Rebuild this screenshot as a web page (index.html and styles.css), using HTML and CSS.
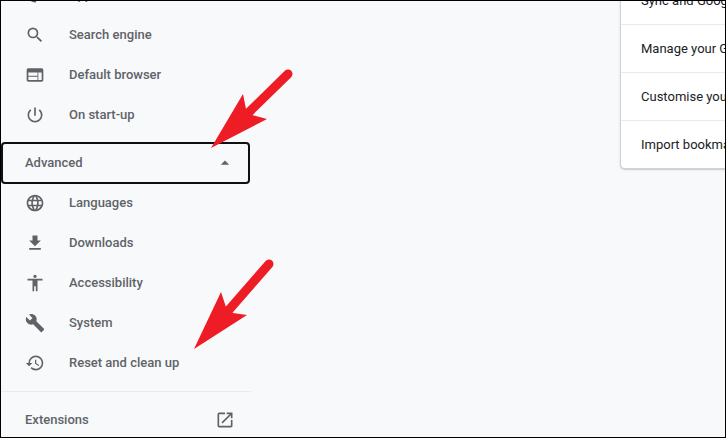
FILE: index.html
```html
<!DOCTYPE html>
<html lang="en">
<head>
    <meta charset="UTF-8">
    <meta name="viewport" content="width=device-width, initial-scale=1.0">
    <title>Settings</title>
    <link rel="stylesheet" href="styles.css">
</head>
<body>
    <div class="frame">
        <nav class="sidebar">
            <a class="menu-item" href="#appearance">
                <svg class="icon" viewBox="0 0 24 24"><path d="M12 3a9 9 0 0 0 0 18c.83 0 1.5-.67 1.5-1.5 0-.39-.15-.74-.39-1.01-.23-.26-.38-.61-.38-.99 0-.83.67-1.5 1.5-1.5H16c2.76 0 5-2.24 5-5 0-4.42-4.03-8-9-8z"/></svg>
                Appearance
            </a>
            <a class="menu-item" href="#search">
                <svg class="icon" viewBox="0 0 24 24"><path d="M15.5 14h-.79l-.28-.27A6.471 6.471 0 0 0 16 9.5 6.5 6.5 0 1 0 9.5 16c1.61 0 3.09-.59 4.23-1.57l.27.28v.79l5 4.99L20.49 19l-4.99-5zm-6 0C7.01 14 5 11.99 5 9.5S7.01 5 9.5 5 14 7.01 14 9.5 11.99 14 9.5 14z"/></svg>
                Search engine
            </a>
            <a class="menu-item" href="#default-browser">
                <svg class="icon" viewBox="0 0 24 24"><path d="M20 4H4c-1.1 0-1.99.9-1.99 2L2 18c0 1.1.9 2 2 2h16c1.1 0 2-.9 2-2V6c0-1.1-.9-2-2-2zm-5 14H4v-4h11v4zm0-5H4V9h11v4zm5 5h-4V9h4v9z"/></svg>
                Default browser
            </a>
            <a class="menu-item" href="#startup">
                <svg class="icon" viewBox="0 0 24 24"><path d="M13 3h-2v10h2V3zm4.83 2.17l-1.42 1.42A6.92 6.92 0 0 1 19 12c0 3.87-3.13 7-7 7s-7-3.13-7-7c0-2.19 1.01-4.14 2.58-5.42L6.17 5.17A8.932 8.932 0 0 0 3 12a9 9 0 0 0 18 0c0-2.74-1.23-5.18-3.17-6.83z"/></svg>
                On start-up
            </a>

            <button class="advanced" type="button" aria-expanded="true">
                Advanced
                <svg class="icon" viewBox="0 0 24 24"><path d="M7 14l5-5 5 5z"/></svg>
            </button>

            <a class="menu-item" href="#languages">
                <svg class="icon" viewBox="0 0 24 24"><path d="M11.99 2C6.47 2 2 6.48 2 12s4.47 10 9.99 10C17.52 22 22 17.52 22 12S17.52 2 11.99 2zm6.93 6h-2.95a15.65 15.65 0 0 0-1.38-3.56A8.03 8.03 0 0 1 18.92 8zM12 4.04c.83 1.2 1.48 2.53 1.91 3.96h-3.82c.43-1.43 1.08-2.76 1.91-3.96zM4.26 14C4.1 13.36 4 12.69 4 12s.1-1.36.26-2h3.38c-.08.66-.14 1.32-.14 2s.06 1.34.14 2H4.26zm.82 2h2.95c.32 1.25.78 2.45 1.38 3.56A7.987 7.987 0 0 1 5.08 16zm2.95-8H5.08a7.987 7.987 0 0 1 4.33-3.56A15.65 15.65 0 0 0 8.03 8zM12 19.96c-.83-1.2-1.48-2.53-1.91-3.96h3.82c-.43 1.43-1.08 2.76-1.91 3.96zM14.34 14H9.66c-.09-.66-.16-1.32-.16-2s.07-1.35.16-2h4.68c.09.65.16 1.32.16 2s-.07 1.34-.16 2zm.25 5.56c.6-1.11 1.06-2.31 1.38-3.56h2.95a8.03 8.03 0 0 1-4.33 3.56zM16.36 14c.08-.66.14-1.32.14-2s-.06-1.34-.14-2h3.38c.16.64.26 1.31.26 2s-.1 1.36-.26 2h-3.38z"/></svg>
                Languages
            </a>
            <a class="menu-item" href="#downloads">
                <svg class="icon" viewBox="0 0 24 24"><path d="M19 9h-4V3H9v6H5l7 7 7-7zM5 18v2h14v-2H5z"/></svg>
                Downloads
            </a>
            <a class="menu-item" href="#accessibility">
                <svg class="icon" viewBox="0 0 24 24"><path d="M12 2c1.1 0 2 .9 2 2s-.9 2-2 2-2-.9-2-2 .9-2 2-2zm9 7h-6v13h-2v-6h-2v6H9V9H3V7h18v2z"/></svg>
                Accessibility
            </a>
            <a class="menu-item" href="#system">
                <svg class="icon" viewBox="0 0 24 24"><path d="M22.7 19l-9.1-9.1c.9-2.3.4-5-1.5-6.9-2-2-5-2.4-7.4-1.3L9 6 6 9 1.6 4.7C.4 7.1.9 10.1 2.9 12.1c1.9 1.9 4.6 2.4 6.9 1.5l9.1 9.1c.4.4 1 .4 1.4 0l2.3-2.3c.5-.4.5-1.1.1-1.4z"/></svg>
                System
            </a>
            <a class="menu-item" href="#reset">
                <svg class="icon" viewBox="0 0 24 24"><path d="M13 3a9 9 0 0 0-9 9H1l3.89 3.89.07.14L9 12H6c0-3.87 3.13-7 7-7s7 3.13 7 7-3.13 7-7 7c-1.93 0-3.68-.79-4.94-2.06l-1.42 1.42A8.954 8.954 0 0 0 13 21a9 9 0 0 0 0-18zm-1 5v5l4.28 2.54.72-1.21-3.5-2.08V8H12z"/></svg>
                Reset and clean up
            </a>

            <hr class="separator">

            <a class="menu-item extensions" href="#extensions">
                Extensions
                <svg class="icon" viewBox="0 0 24 24"><path d="M19 19H5V5h7V3H5a2 2 0 0 0-2 2v14a2 2 0 0 0 2 2h14c1.1 0 2-.9 2-2v-7h-2v7zM14 3v2h3.59l-9.83 9.83 1.41 1.41L19 6.41V10h2V3h-7z"/></svg>
            </a>
        </nav>

        <main class="content">
            <div class="card">
                <a class="row" href="#sync">Sync and Google services</a>
                <a class="row" href="#account">Manage your Google Account</a>
                <a class="row" href="#profile">Customise your Chrome profile</a>
                <a class="row" href="#import">Import bookmarks and settings</a>
            </div>
        </main>

        <!-- arrows pointing at Advanced and Reset -->
        <svg class="arrows" width="310" height="360" viewBox="0 0 310 360">
            <path class="shaft" d="M288 74L240 121M269 264L221 319"/>
            <path d="M211 148L243 94L246 109L252 115L267 119z"/>
            <path d="M194 349L221 292L226 307L233 313L247 315z"/>
        </svg>
    </div>
</body>
</html>
```

FILE: styles.css
```css
* {
    box-sizing: border-box;
}
body {
    margin: 0;
    font-family: Roboto, "Liberation Sans", sans-serif;
    font-size: 13px;
    line-height: 20px;
    background-color: #f8f9fb;
    color: #202124;
}
a {
    color: inherit;
    text-decoration: none;
}
.frame {
    position: relative;
    display: flex;
    height: 100vh;
    border: 1px solid #000;
    overflow: hidden;
}
/* the page is scrolled, so both columns start above the frame */
.sidebar {
    flex: 0 0 250px;
    margin-top: -26px;
    font-weight: 500;
    color: #5f6368;
}
.menu-item {
    display: flex;
    align-items: center;
    gap: 24px;
    height: 40px;
    padding: 0 16px 0 24px;
}
.icon {
    flex: none;
    width: 20px;
    height: 20px;
    fill: #5f6368;
}
.advanced {
    display: flex;
    align-items: center;
    justify-content: space-between;
    width: 247px;
    height: 40px;
    margin: 8px 1px 0;
    padding: 0 14px 0 23px;
    border: none;
    border-radius: 3px;
    outline: 2px solid #101010;
    outline-offset: -1px;
    background: none;
    font: inherit;
    color: inherit;
    cursor: pointer;
}
.separator {
    height: 1px;
    margin: 8px 0;
    border: none;
    background-color: #e8eaed;
}
.extensions {
    justify-content: space-between;
}
.content {
    flex: 1;
    min-width: 0;
    margin-top: -24px;
    padding-left: 370px;
}
.card {
    width: 680px;
    background-color: #fff;
    border-radius: 4px;
    box-shadow: 0 0 0 1px #d0d2d4, 0 1px 0 1px #d0d2d4, 0 1px 3px 1px rgba(60, 64, 67, 0.12);
}
.row {
    display: flex;
    align-items: center;
    height: 48px;
    padding: 0 20px;
    border-bottom: 1px solid #e8eaed;
}
.row:last-child {
    height: 47px;
    border-bottom: none;
}
.arrows {
    position: absolute;
    top: -1px;
    left: -1px;
    fill: #ee1c25;
    pointer-events: none;
}
.shaft {
    fill: none;
    stroke: #ee1c25;
    stroke-width: 9;
    stroke-linecap: round;
}
```
